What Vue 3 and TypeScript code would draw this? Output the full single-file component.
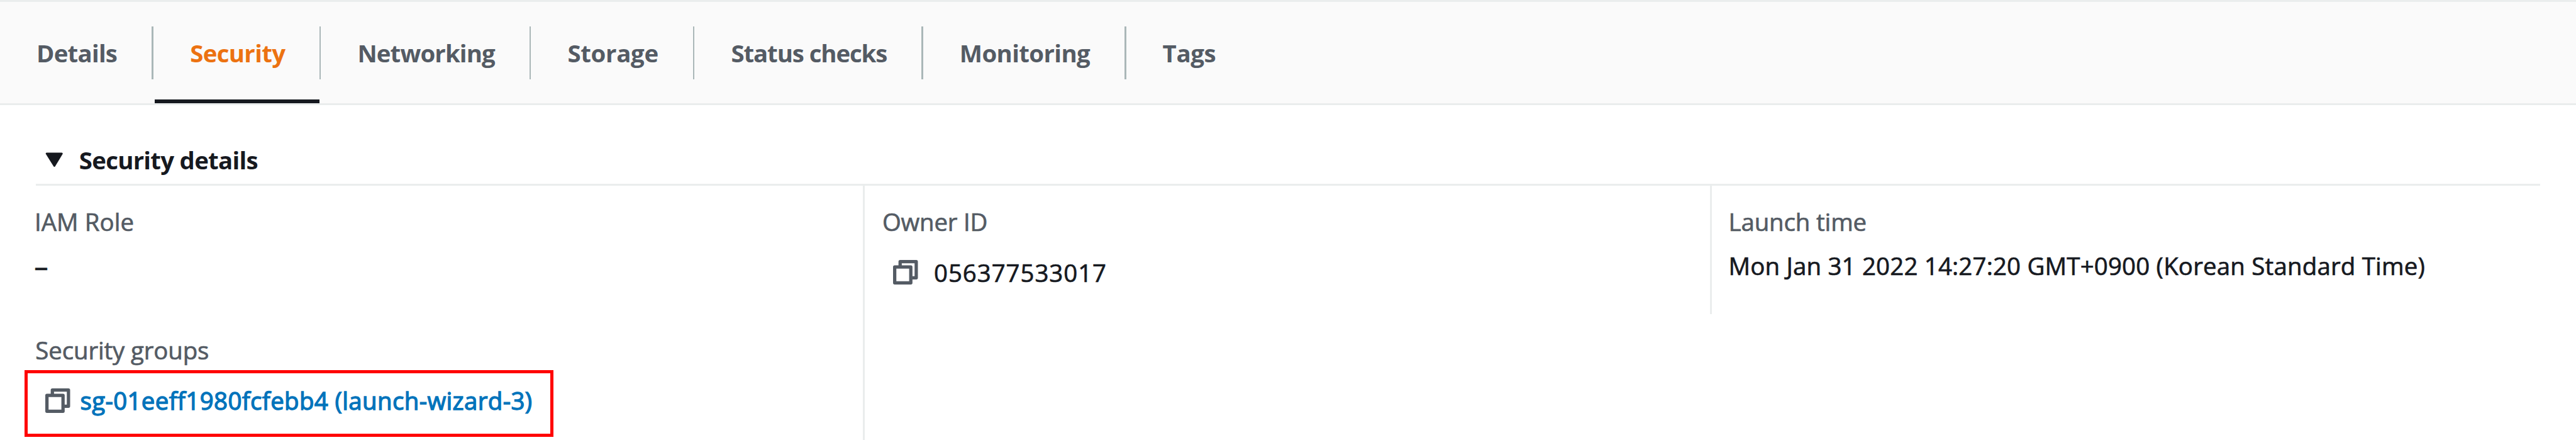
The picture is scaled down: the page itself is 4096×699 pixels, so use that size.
<script setup lang="ts">
import { nextTick, type Directive } from 'vue'

interface Tab {
  label: string
  width: number
  active?: boolean
}

const tabs: Tab[] = [
  { label: 'Details', width: 128.2 },
  { label: 'Security', width: 151.2, active: true },
  { label: 'Networking', width: 218.5 },
  { label: 'Storage', width: 144.5 },
  { label: 'Status checks', width: 247.9 },
  { label: 'Monitoring', width: 207.3 },
  { label: 'Tags', width: 84.5 },
]

// Adjusts the tracking of a label so that its text runs to the given width.
const vTrack: Directive<HTMLElement, number> = {
  async mounted(el, { value }) {
    await nextTick()
    const count = (el.textContent ?? '').length
    const natural = el.getBoundingClientRect().width
    el.style.letterSpacing = `${(value - natural) / count}px`
  },
}
</script>

<template>
  <main class="page">
    <nav class="tabs">
      <template v-for="(tab, i) in tabs" :key="tab.label">
        <span v-if="i > 0" class="divider"></span>
        <a class="tab" :class="{ active: tab.active }">
          <span v-track="tab.width" class="text">{{ tab.label }}</span>
        </a>
      </template>
    </nav>

    <section class="panel">
      <h2 class="caption">
        <svg class="caret" viewBox="0 0 28 23">
          <path d="M2 2H26L14.2 21.5Z" fill="#16191f" stroke="#16191f" stroke-width="3" stroke-linejoin="round" />
        </svg>
        <span v-track="284" class="text">Security details</span>
      </h2>

      <div class="grid">
        <div class="cell first">
          <div class="label"><span v-track="158" class="text">IAM Role</span></div>
          <div class="value dash">–</div>
        </div>

        <div class="cell owner">
          <div class="label"><span v-track="167" class="text">Owner ID</span></div>
          <div class="value copyable">
            <svg class="copy" viewBox="0 0 128 126">
              <path d="M36.500 30V8.500H119.500V91.500H98" />
              <path d="M8.500 35.500H91.500V117.500H8.500Z" />
            </svg>
            <span v-track="275" class="text">056377533017</span>
          </div>
        </div>

        <div class="cell launch">
          <div class="label"><span v-track="219.500" class="text">Launch time</span></div>
          <div class="value">
            <span v-track="1107.500" class="text">Mon Jan 31 2022 14:27:20 GMT+0900 (Korean Standard Time)</span>
          </div>
        </div>

        <div class="cell groups">
          <div class="label"><span v-track="276" class="text">Security groups</span></div>
          <div class="highlight">
            <svg class="copy" viewBox="0 0 128 126">
              <path d="M36.500 30V8.500H119.500V91.500H98" />
              <path d="M8.500 35.500H91.500V117.500H8.500Z" />
            </svg>
            <a class="link"><span v-track="719" class="text">sg-01eeff1980fcfebb4 (launch-wizard-3)</span></a>
          </div>
        </div>
      </div>
    </section>
  </main>
</template>

<style>
html,
body {
  margin: 0;
  background: #fff;
  overflow: hidden;
}
</style>

<style scoped>
.page {
  width: 4096px;
  height: 699px;
  overflow: hidden;
  background: #fff;
  color: #16191f;
  font-family: 'Open Sans', 'Noto Sans', sans-serif;
  font-size: 38.4px;
  line-height: 48px;
}
.text {
  display: inline-block;
  white-space: nowrap;
  font-kerning: normal;
  font-variant-ligatures: none;
}
.tabs {
  display: flex;
  align-items: center;
  box-sizing: border-box;
  height: 167px;
  border-top: 3px solid #eaeded;
  border-bottom: 3px solid #eaeded;
  background: #fafafa;
}
.tab {
  display: flex;
  align-items: center;
  height: 100%;
  padding: 0 55px 0 58px;
  color: #545b64;
  font-weight: 700;
}
.tab.active {
  color: #ec7211;
  box-shadow: inset 0 -6px #16191f;
}
.divider {
  width: 2.5px;
  height: 84px;
  background: #aab7b8;
}
.tab.active {
  margin-left: 2.5px;
  padding-left: 56px;
  padding-right: 54.5px;
}
.panel {
  margin: 0 57px 0 56.5px;
}
.caption {
  display: flex;
  align-items: center;
  gap: 25px;
  height: 48px;
  margin: 0;
  padding: 62.5px 0 14.8px 15.8px;
  font-size: inherit;
  font-weight: 700;
}
.caret {
  width: 28.5px;
  height: 23px;
}
.grid {
  display: grid;
  grid-template-columns: 1315.5px 1347px 1fr;
  grid-template-rows: 203.5px 202px;
  border-top: 3px solid #eaeded;
}
.cell {
  padding-top: 33px;
  -webkit-text-stroke: 0.7px currentColor;
}
.first {
  grid-area: 1 / 1;
}
.owner {
  grid-area: 1 / 2 / 3 / 3;
  border-left: 3px solid #eaeded;
  padding-left: 28px;
}
.launch {
  grid-area: 1 / 3;
  border-left: 3px solid #eaeded;
  padding-left: 26.5px;
}
.groups {
  grid-area: 2 / 1;
}
.label {
  height: 48px;
  color: #545b64;
}
.first .label {
  margin-left: -1.5px;
}
.groups .label {
  margin-left: -0.2px;
}
.value {
  height: 48px;
  margin-top: 21.3px;
}
.dash {
  margin-left: -2px;
  font-size: 44px;
}
.copyable {
  display: flex;
  align-items: center;
  gap: 25.5px;
  margin-top: 32.5px;
  padding-left: 17px;
}
.copy {
  flex: none;
  width: 39.5px;
  height: 39px;
  fill: none;
  stroke: #545b64;
  stroke-width: 17;
  stroke-linejoin: round;
}
.highlight {
  display: flex;
  align-items: center;
  gap: 16px;
  box-sizing: border-box;
  width: 841px;
  height: 106px;
  margin: 8px 0 0 -17.5px;
  padding: 0 0 9px 28px;
  border: 5px solid #f00;
}
.link {
  color: #0073bb;
  -webkit-text-stroke: 1.3px currentColor;
}
</style>
